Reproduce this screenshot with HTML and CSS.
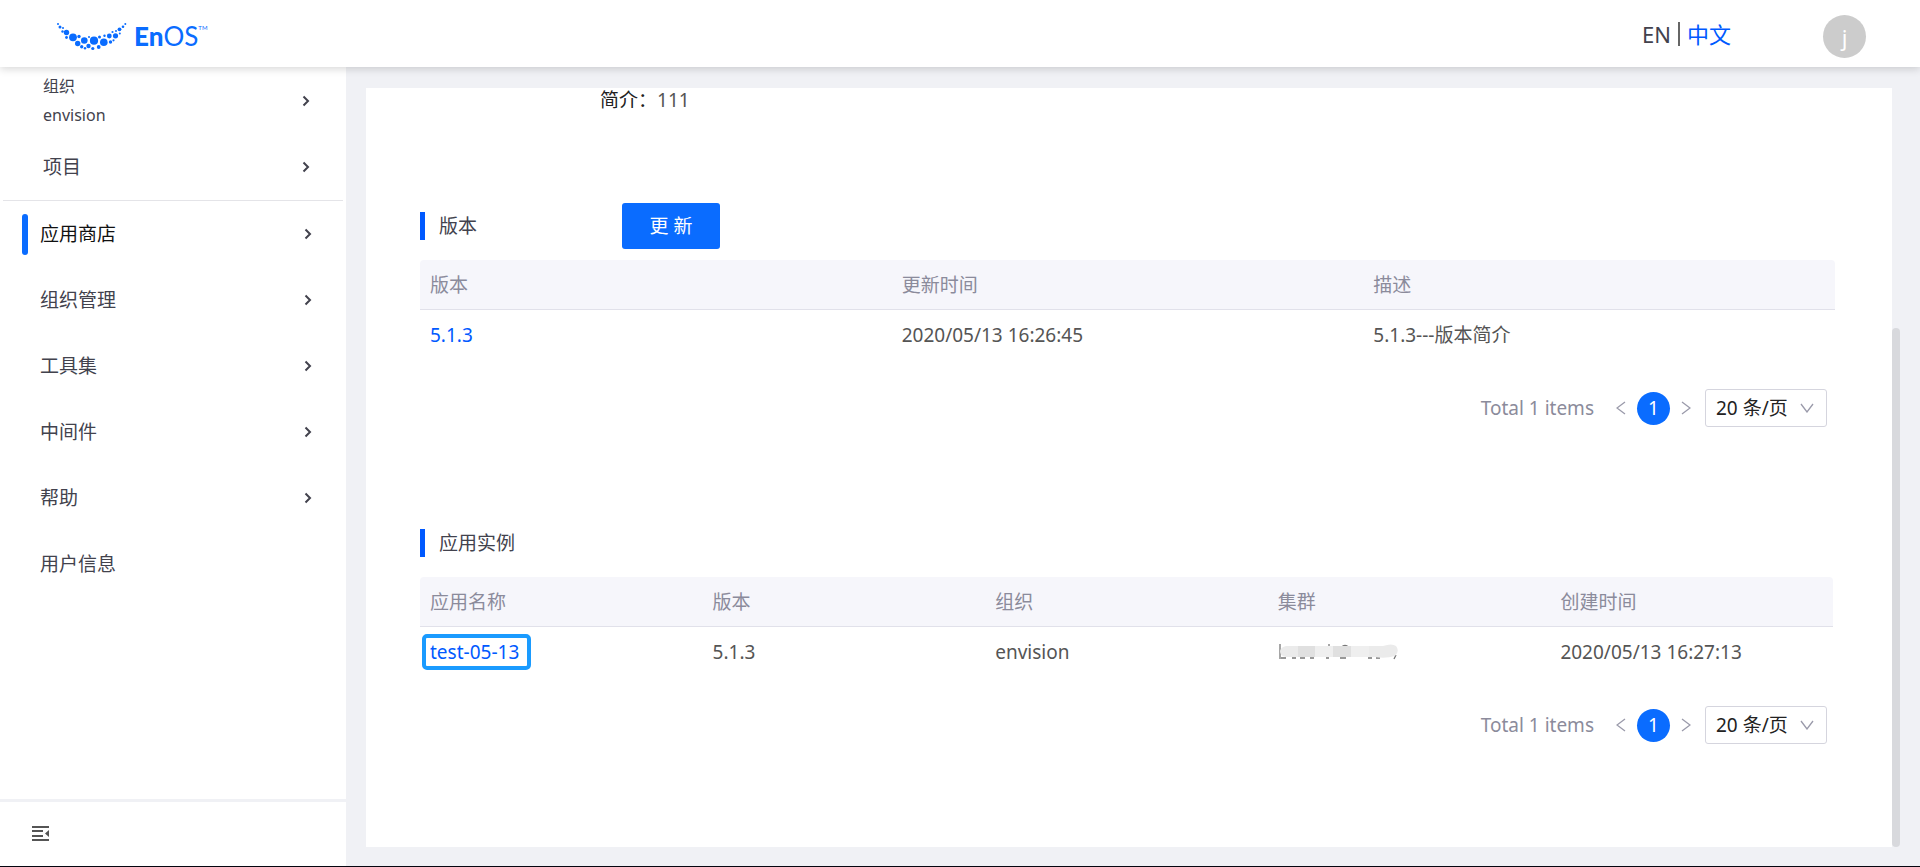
FILE: index.html
```html
<!DOCTYPE html>
<html lang="zh-CN">
<head>
<meta charset="utf-8">
<title>EnOS 应用商店</title>
<link rel="stylesheet" href="styles.css">
</head>
<body>
<svg width="0" height="0" class="sprite" aria-hidden="true">
  <symbol id="chev" viewBox="0 0 8 12"><path d="M1.5 1.5 6 6 1.5 10.5" fill="none" stroke="currentColor" stroke-width="2"/></symbol>
  <symbol id="prev" viewBox="0 0 10 14"><path d="M9 1 1 7l8 6" fill="none" stroke="currentColor" stroke-width="1.3"/></symbol>
  <symbol id="next" viewBox="0 0 10 14"><path d="M1 1l8 6-8 6" fill="none" stroke="currentColor" stroke-width="1.3"/></symbol>
  <symbol id="down" viewBox="0 0 14 10"><path d="M1 1l6 8 6-8" fill="none" stroke="currentColor" stroke-width="1.3"/></symbol>
</svg>
<div class="app">
  <header class="topbar">
    <a class="logo" href="#">
      <svg class="logo-mark" viewBox="0 0 70 28" width="70" height="28" fill="#0a6cff" aria-hidden="true">
        <circle cx="1" cy="1" r="1"/><circle cx="3" cy="4" r="1.5"/><circle cx="6" cy="5" r="1"/><circle cx="5.500" cy="8.500" r="1.200"/>
        <circle cx="9.500" cy="9.500" r="2.700"/><circle cx="9.500" cy="14.500" r="1.400"/><circle cx="16" cy="14.300" r="3.900"/>
        <circle cx="22" cy="13.500" r="1.700"/><circle cx="20.700" cy="20.500" r="2.700"/><circle cx="27.300" cy="17.500" r="3.300"/>
        <circle cx="24.700" cy="23.700" r="1.700"/><circle cx="28" cy="25.300" r="1.200"/><circle cx="31.500" cy="23" r="2.200"/>
        <circle cx="32" cy="14" r="1"/><circle cx="37" cy="17.700" r="4.100"/><circle cx="35.800" cy="25.500" r="1.600"/>
        <circle cx="41.700" cy="24" r="1.900"/><circle cx="42.500" cy="14" r="1.500"/><circle cx="46.800" cy="19.300" r="3.800"/>
        <circle cx="47.500" cy="12.800" r="1.200"/><circle cx="52.300" cy="13" r="2.400"/><circle cx="53.500" cy="19" r="1.700"/>
        <circle cx="56.500" cy="17.300" r="1.100"/><circle cx="55.500" cy="9" r="1.100"/><circle cx="58.500" cy="12.800" r="2.600"/>
        <circle cx="59" cy="8" r="1"/><circle cx="62.500" cy="6.300" r="1.900"/><circle cx="62.800" cy="10.500" r="1"/>
        <circle cx="66" cy="3.800" r="1.300"/><circle cx="68.300" cy="1" r="1"/>
      </svg>
      <span class="logo-text"><b>En</b>OS</span><span class="logo-tm">TM</span>
    </a>
    <div class="lang"><a href="#">EN</a><span class="bar"></span><a class="lang-on" href="#">中文</a></div>
    <button class="avatar" type="button">j</button>
  </header>
  <div class="body">
    <aside class="sidebar">
      <div class="context">
        <a class="context-row context-org" href="#"><span>组织<br>envision</span><svg class="chev"><use href="#chev"/></svg></a>
        <a class="context-row" href="#"><span>项目</span><svg class="chev"><use href="#chev"/></svg></a>
      </div>
      <nav class="menu">
        <a class="item active" href="#">应用商店<svg class="chev"><use href="#chev"/></svg></a>
        <a class="item" href="#">组织管理<svg class="chev"><use href="#chev"/></svg></a>
        <a class="item" href="#">工具集<svg class="chev"><use href="#chev"/></svg></a>
        <a class="item" href="#">中间件<svg class="chev"><use href="#chev"/></svg></a>
        <a class="item" href="#">帮助<svg class="chev"><use href="#chev"/></svg></a>
        <a class="item" href="#">用户信息</a>
      </nav>
      <div class="side-foot">
        <button class="fold" type="button" aria-label="收起菜单">
          <svg width="18" height="16" viewBox="0 0 18 16" fill="#555"><path d="M0 0h17v2H0zM0 4h11v2H0zM0 9h11v2H0zM0 13h17v2H0zM17 4v7l-4-3.500z"/></svg>
        </button>
      </div>
    </aside>
    <main class="main">
      <div class="card">
        <p class="intro">简介：<span>111</span></p>
        <section class="section">
          <div class="head"><h2 class="title">版本</h2><button class="primary" type="button">更 新</button></div>
          <table class="table">
            <thead><tr><th>版本</th><th>更新时间</th><th>描述</th></tr></thead>
            <tbody><tr><td><a href="#">5.1.3</a></td><td>2020/05/13 16:26:45</td><td>5.1.3---版本简介</td></tr></tbody>
          </table>
          <div class="pager">
            <span class="total">Total 1 items</span>
            <button class="step" type="button" aria-label="上一页"><svg width="10" height="14"><use href="#prev"/></svg></button>
            <button class="page" type="button">1</button>
            <button class="step" type="button" aria-label="下一页"><svg width="10" height="14"><use href="#next"/></svg></button>
            <span class="size"><select aria-label="每页条数"><option>20 条/页</option></select><svg width="14" height="10"><use href="#down"/></svg></span>
          </div>
        </section>
        <section class="section">
          <div class="head"><h2 class="title">应用实例</h2></div>
          <div class="inset">
          <table class="table">
            <thead><tr><th>应用名称</th><th>版本</th><th>组织</th><th>集群</th><th>创建时间</th></tr></thead>
            <tbody><tr>
              <td><a class="marked" href="#">test-05-13</a></td><td>5.1.3</td><td>envision</td>
              <td><svg class="smudge" width="121" height="18" viewBox="0 0 121 18" role="img" aria-label="集群">
                <path d="M2 1v15M51 1v3M64 4c1-2 5-2 6 0M118 12l-2 4M3 15h5M14 15h4M22 15h5M32 15h4M48 15h3M62 15h6M90 15h4M98 15h4" fill="none" stroke="#777" stroke-width="1.300"/>
                <path d="M8 3H105q9-3 13 0 4 5-1 10-10 3-20 1H8q-6-1-6-6 1-4 6-5z" fill="#ebebeb"/>
                <path d="M20 3h17v11H20zM55 3h18v11H55z" fill="#e0e0e0"/><path d="M37 3h18v11H37zM73 3h18v11H73z" fill="#efefef"/>
              </svg></td>
              <td>2020/05/13 16:27:13</td>
            </tr></tbody>
          </table>
          </div>
          <div class="pager">
            <span class="total">Total 1 items</span>
            <button class="step" type="button" aria-label="上一页"><svg width="10" height="14"><use href="#prev"/></svg></button>
            <button class="page" type="button">1</button>
            <button class="step" type="button" aria-label="下一页"><svg width="10" height="14"><use href="#next"/></svg></button>
            <span class="size"><select aria-label="每页条数"><option>20 条/页</option></select><svg width="14" height="10"><use href="#down"/></svg></span>
          </div>
        </section>
      </div>
      <div class="track"><div class="thumb"></div></div>
    </main>
  </div>
</div>
</body>
</html>
```

FILE: styles.css
```css
* { box-sizing: border-box; }
body {
  margin: 0;
  font: 19px/24px "Noto Sans", "Noto Sans CJK SC", sans-serif;
  font-weight: 400;
  color: #42424d;
  background: #f0f1f5;
}
a { color: inherit; text-decoration: none; }
button { border: 0; padding: 0; background: none; font: inherit; color: inherit; cursor: pointer; }
svg { display: block; flex: none; }
.sprite { position: absolute; }

.app { display: flex; flex-direction: column; height: 100vh; overflow: hidden; border-bottom: 1px solid #05050f; }

.topbar {
  display: flex;
  align-items: center;
  flex: none;
  height: 67px;
  padding: 0 54px 0 57px;
  background: #fff;
  box-shadow: 0 2px 8px rgba(0, 0, 0, 0.16);
  z-index: 1;
}
.logo { display: flex; align-items: center; color: #0a6cff; }
.logo-mark { margin: 6px 7px 0 0; }
.logo-text { font: 400 26px/32px Lato, sans-serif; margin-top: 4px; }
.logo-text b { font-weight: 900; }
.logo-tm { font: 6px/8px Lato, sans-serif; align-self: flex-start; margin-top: 8px; }
.lang { display: flex; align-items: center; gap: 7px; margin-left: auto; font-size: 22px; }
.bar { width: 2px; height: 24px; background: #666; }
.lang-on { color: #0059ff; }
.avatar { width: 43px; height: 43px; margin: 6px 0 0 92px; border-radius: 50%; background: #ccc; color: #fff; font-size: 22px; }

.body { display: flex; flex: 1; min-height: 0; }

.sidebar { display: flex; flex-direction: column; flex: none; width: 346px; background: #fff; }
.context { margin: 0 3px; padding-bottom: 1px; border-bottom: 1px solid #e4e4e8; }
.context-row { display: flex; align-items: center; justify-content: space-between; height: 64px; padding: 0 33px 0 40px; }
.context-org { height: 68px; font-size: 16px; line-height: 29px; }
.chev { width: 8px; height: 12px; }
.menu { flex: 1; }
.item { display: flex; align-items: center; justify-content: space-between; height: 66px; padding: 0 34px 0 12px; margin-left: 28px; }
.active { color: #111; }
.active::before { content: ""; width: 6px; height: 41px; margin-left: -18px; margin-right: 12px; border-radius: 3px; background: #0a6cff; }
.active .chev { margin-left: auto; color: #42424d; }
.side-foot { display: flex; align-items: center; flex: none; height: 67px; padding-left: 32px; border-top: 3px solid #f0f1f5; }

.main { display: grid; grid-template-columns: 1fr 8px; flex: 1; min-width: 0; padding: 21px 20px 19px; }
.card { min-width: 0; padding: 0 57px 0 54px; background: #fff; overflow: hidden; }
.track { display: flex; align-items: flex-end; }
.thumb { width: 100%; height: 519px; max-height: 100%; border-radius: 4px; background: #d8d9dd; }

.intro { margin: 0 0 91px 180px; color: #222; }
.intro span { color: #555; }
.section { margin-bottom: 93px; }
.head { display: grid; grid-template-columns: 202px auto; justify-content: start; align-items: center; height: 46px; margin-bottom: 11px; }
.title { margin: 0; padding-left: 14px; border-left: 5px solid #0059ff; font-size: 19px; font-weight: 400; line-height: 28px; }
.primary { width: 98px; height: 46px; border-radius: 3px; background: #0a6cff; color: #fff; }

.inset { padding-right: 2px; }
.table { width: 100%; table-layout: fixed; border-collapse: separate; border-spacing: 0; }
.table th { height: 50px; padding: 0 10px; border-bottom: 1px solid #e1e1ea; background: #f6f6fb; color: #8b8b9b; font-weight: 400; text-align: left; }
.table th:first-child { border-top-left-radius: 4px; }
.table th:last-child { border-top-right-radius: 4px; }
.table td { height: 49px; padding: 0 10px; color: #555; white-space: nowrap; }
.table a { color: #0059ff; }
.marked { display: inline-block; margin-left: -8px; padding: 0 8px 0 4px; border: 4px solid #1a9bff; border-radius: 5px; line-height: 28px; }

.pager { display: flex; align-items: center; justify-content: flex-end; margin-top: 30px; padding-right: 8px; }
.total { margin-right: 22px; color: #8b8b9b; }
.step { color: #9a9aaa; }
.page { width: 33px; height: 33px; margin: 0 11px; border-radius: 50%; background: #0a6cff; color: #fff; }
.size { display: grid; align-items: center; width: 122px; margin-left: 14px; }
.size select, .size svg { grid-area: 1 / 1; }
.size select { appearance: none; width: 100%; height: 38px; padding: 0 10px; border: 1px solid #d5d5de; border-radius: 3px; background: #fff; color: #222; font: inherit; }
.size svg { justify-self: end; margin-right: 13px; color: #9a9aaa; pointer-events: none; }
```
